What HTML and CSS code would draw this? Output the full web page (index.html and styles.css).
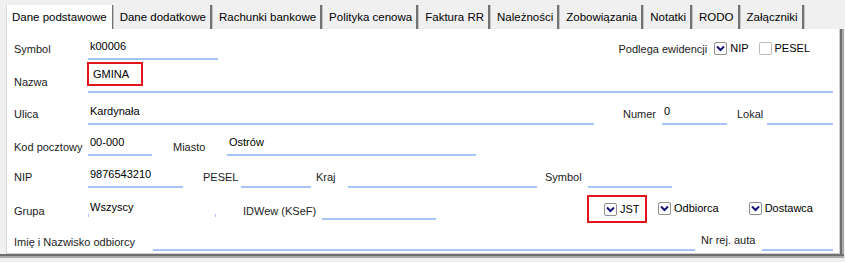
FILE: index.html
```html
<!DOCTYPE html>
<html lang="pl">
<head>
    <meta charset="UTF-8">
    <title>Kontrahent - Dane podstawowe</title>
    <link rel="stylesheet" href="styles.css">
</head>
<body>
    <div class="window">
        <div class="tabs">
            <div class="tab active">Dane podstawowe</div>
            <div class="tab">Dane dodatkowe</div>
            <div class="tab">Rachunki bankowe</div>
            <div class="tab">Polityka cenowa</div>
            <div class="tab">Faktura RR</div>
            <div class="tab">Należności</div>
            <div class="tab">Zobowiązania</div>
            <div class="tab">Notatki</div>
            <div class="tab">RODO</div>
            <div class="tab">Załączniki</div>
        </div>

        <div class="panel">
            <div class="row row-first">
                <span class="lbl col1">Symbol</span>
                <span class="field f-symbol">k00006</span>
                <span class="lbl evid">Podlega ewidencji</span>
                <span class="check c-nip">
                    <span class="box"><svg width="9" height="7" viewBox="0 0 9 7"><path d="M1 1.5 L4.5 5 L8 1.5" /></svg></span>NIP
                </span>
                <span class="check c-pesel">
                    <span class="box off"></span>PESEL
                </span>
            </div>

            <div class="row row-name">
                <span class="lbl col1">Nazwa</span>
                <span class="field f-name"><span class="mark-text">GMINA</span></span>
            </div>

            <div class="row">
                <span class="lbl col1">Ulica</span>
                <span class="field f-street">Kardynała</span>
                <span class="lbl l-number">Numer</span>
                <span class="field f-number">0</span>
                <span class="lbl l-local">Lokal</span>
                <span class="field f-rest"></span>
            </div>

            <div class="row row-short">
                <span class="lbl low col1">Kod pocztowy</span>
                <span class="field f-zip">00-000</span>
                <span class="lbl low l-city">Miasto</span>
                <span class="field f-city">Ostrów</span>
            </div>

            <div class="row">
                <span class="lbl col1">NIP</span>
                <span class="field f-nip">9876543210</span>
                <span class="lbl l-pesel">PESEL</span>
                <span class="field f-pesel"></span>
                <span class="lbl l-country">Kraj</span>
                <span class="field f-country"></span>
                <span class="lbl l-symbol">Symbol</span>
                <span class="field f-symbol2"></span>
            </div>

            <div class="row">
                <span class="lbl low col1">Grupa</span>
                <span class="combo">Wszyscy</span>
                <span class="lbl low l-idwew">IDWew (KSeF)</span>
                <span class="field f-idwew"></span>
                <span class="mark-box">
                    <span class="check">
                        <span class="box"><svg width="9" height="7" viewBox="0 0 9 7"><path d="M1 1.5 L4.5 5 L8 1.5" /></svg></span>JST
                    </span>
                </span>
                <span class="check c-buyer">
                    <span class="box"><svg width="9" height="7" viewBox="0 0 9 7"><path d="M1 1.5 L4.5 5 L8 1.5" /></svg></span>Odbiorca
                </span>
                <span class="check c-supplier">
                    <span class="box"><svg width="9" height="7" viewBox="0 0 9 7"><path d="M1 1.5 L4.5 5 L8 1.5" /></svg></span>Dostawca
                </span>
            </div>

            <div class="row row-short">
                <span class="lbl low l-receiver">Imię i Nazwisko odbiorcy</span>
                <span class="field f-receiver"></span>
                <span class="lbl l-car">Nr rej. auta</span>
                <span class="field f-rest"></span>
            </div>
        </div>
    </div>
</body>
</html>
```

FILE: styles.css
```css
* {
    margin: 0;
    padding: 0;
    box-sizing: border-box;
}

body {
    font-family: 'Liberation Sans', Arial, sans-serif;
    font-size: 11px;
    background-color: #f0f0f0;
    color: #1b1b1b;
    width: 845px;
    height: 262px;
    overflow: hidden;
}

.window {
    width: 844px;
    padding-top: 5px;
    border-bottom: 2px solid #6e6e6e;
    box-shadow: 0 2px 0 #a9a9a9;
}

/* tab strip */

.tabs {
    display: flex;
    height: 24px;
    padding-left: 6px;
}

.tab {
    font-size: 11.5px;
    line-height: 24px;
    padding: 0 4px 0 7px;
    color: #000;
    white-space: nowrap;
    border-right: 2px solid #727272;
    box-shadow: 1px 0 0 #c4c4c4;
}

.tab.active {
    background-color: #fff;
    border-left: 1px solid #d6d6d6;
    border-right-width: 1px;
    padding: 0 5px;
}

/* panel */

.panel {
    margin-left: 6px;
    width: 834px;
    height: 225px;
    padding: 1px 6px 0 7px;
    background-color: #fff;
    border-left: 1px solid #d6d6d6;
    border-right: 1px solid #cfcfcf;
    border-bottom: 1px solid #cfcfcf;
    box-shadow: 2px 0 0 #6e6e6e, 4px 0 0 #a9a9a9;
}

.row {
    display: flex;
    align-items: flex-end;
    height: 32px;
}

.row-first {
    height: 30px;
}

.row-name {
    height: 33px;
}

.row-short {
    height: 31px;
}

.lbl {
    line-height: 16px;
    margin-bottom: 3px;
    white-space: nowrap;
    flex-shrink: 0;
}

.lbl.low {
    margin-bottom: 1px;
}

.col1 {
    width: 74px;
}

.field {
    line-height: 16px;
    padding: 0 0 4px 2px;
    border-bottom: 2px solid #a6c4f6;
    color: #000;
    white-space: nowrap;
    flex-shrink: 0;
}

.combo {
    width: 128px;
    line-height: 16px;
    padding: 0 0 5px 2px;
    color: #000;
    flex-shrink: 0;
    background:
        linear-gradient(#a6c4f6, #a6c4f6) left bottom 3px / 1px 3px no-repeat,
        linear-gradient(#a6c4f6, #a6c4f6) right bottom 3px / 1px 3px no-repeat;
}

/* field widths */

.f-symbol { width: 130px; }
.f-name { flex: 1; padding-bottom: 5px; }
.f-street { width: 506px; }
.f-number { width: 65px; }
.f-rest { flex: 1; }
.f-zip { width: 64px; }
.f-city { width: 249px; }
.f-nip { width: 95px; }
.f-pesel { width: 70px; }
.f-country { width: 189px; }
.f-symbol2 { width: 84px; }
.f-idwew { width: 114px; }
.f-receiver { width: 542px; }

/* label widths */

.l-number { margin-left: 29px; width: 39px; }
.l-local { margin-left: 10px; width: 30px; }
.l-city { margin-left: 21px; width: 54px; }
.l-pesel { margin-left: 20px; width: 38px; }
.l-country { margin-left: 5px; width: 32px; }
.l-symbol { margin-left: 8px; width: 43px; }
.l-idwew { margin-left: 27px; width: 79px; }
.l-receiver { width: 139px; }
.l-car { margin-left: 6px; width: 61px; }

.evid {
    margin-left: auto;
}

/* checkboxes */

.check {
    display: flex;
    align-items: center;
    line-height: 16px;
    margin-bottom: 4px;
    white-space: nowrap;
    color: #000;
}

.box {
    width: 13px;
    height: 13px;
    margin-right: 3px;
    display: flex;
    align-items: center;
    justify-content: center;
    background-color: #fff;
    border: 1px solid #8f8f8f;
    border-radius: 2px;
}

.box.off {
    border-color: #bcbcbc;
}

.box path {
    fill: none;
    stroke: #14147a;
    stroke-width: 2;
}

.c-nip { margin-left: 7px; }
.c-pesel { margin-left: 10px; margin-right: 23px; }
.c-buyer { margin-left: 11px; }
.c-supplier { margin-left: 30px; }

/* red highlights */

.mark-text {
    display: inline-block;
    vertical-align: top;
    line-height: 16px;
    margin-left: -3px;
    padding: 2px 12px 2px 4px;
    border: 2px solid #e3141c;
}

.mark-box {
    display: flex;
    align-items: center;
    width: 60px;
    height: 28px;
    margin-left: 151px;
    margin-bottom: -3px;
    padding-left: 15px;
    border: 2px solid #e3141c;
}

.mark-box .check {
    margin-bottom: 0;
}
```
